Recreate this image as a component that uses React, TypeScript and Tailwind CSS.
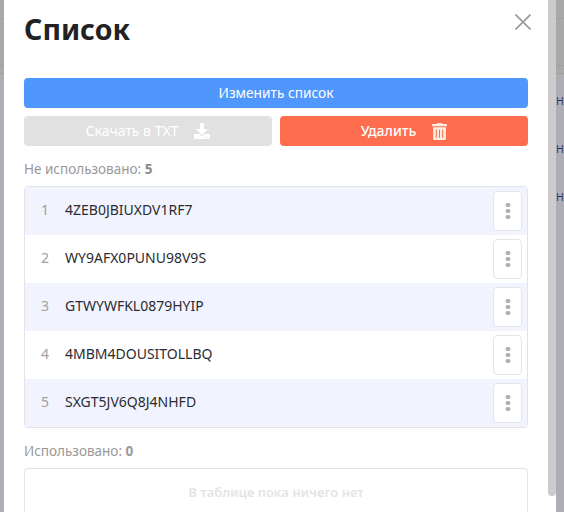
import { FaDownload, FaTrashAlt } from 'react-icons/fa';

const codes = ['4ZEB0JBIUXDV1RF7', 'WY9AFX0PUNU98V9S', 'GTWYWFKL0879HYIP', '4MBM4DOUSITOLLBQ', 'SXGT5JV6Q8J4NHFD'];

function Dots() {
  return (
    <div className="flex translate-x-[0.5px] flex-col gap-[1.5px]">
      <span className="h-[4.5px] w-[4.5px] rounded-full bg-[#b0b0b0]" />
      <span className="h-[4.5px] w-[4.5px] rounded-full bg-[#b0b0b0]" />
      <span className="h-[4.5px] w-[4.5px] rounded-full bg-[#b0b0b0]" />
    </div>
  );
}

function Row({ num, code }: { num: number; code: string }) {
  return (
    <div className="flex h-12 items-center pl-4 pr-[5px] odd:bg-[#f1f4fe] even:bg-white">
      <span className="w-[24px] pb-[2px] text-sm text-[#a0a0a0]">{num}</span>
      <span className="flex-1 pb-[2px] text-sm text-[#2b2b33]">{code}</span>
      <button className="flex h-10 w-[29px] items-center justify-center rounded border border-[#e4e4e8] bg-white">
        <Dots />
      </button>
    </div>
  );
}

// the page behind the modal only shows as two thin strips
function SideStrip({ width, text }: { width: string; text?: boolean }) {
  return (
    <div className={`${width} h-full shrink-0 overflow-hidden bg-[#aeadb6]`}>
      <div className="h-[75px] bg-[#a9a9a9]">
        <div className="h-[19px] border-b border-[#9f9f9f]" />
        <div className="h-[47px] border-b border-[#9f9f9f]" />
        <div className="h-[8px] border-b border-[#9f9f9f]" />
      </div>
      {text && (
        <div className="flex flex-col gap-[28px] pt-[16px] text-[10.5px] leading-[20px] text-[#34345a]">
          <div>Н</div>
          <div>Н</div>
          <div>Н</div>
        </div>
      )}
    </div>
  );
}

export default function App() {
  return (
    <div className="flex h-[512px] w-[564px] overflow-hidden font-['Noto_Sans','Open_Sans',sans-serif]">
      <SideStrip width="w-1" />

      <div className="relative h-full w-[552px] shrink-0 overflow-hidden bg-white">
        <div className="w-[544px] px-5">
          <h1 className="pt-[8px] text-[28.5px] font-bold leading-[42px] text-[#222222]">Список</h1>

          <button className="mt-[28px] block h-[30px] w-full rounded bg-[#4f97fd] text-[13.7px] text-white">
            Изменить список
          </button>
          <div className="mt-2 flex gap-2">
            <button className="flex h-[30px] flex-1 items-center justify-center gap-4 rounded bg-[#e1e1e1] text-sm text-white">
              Скачать в TXT
              <FaDownload className="h-4 w-4" />
            </button>
            <button className="flex h-[30px] flex-1 items-center justify-center gap-4 rounded bg-[#ff6d4f] text-sm font-medium text-white">
              Удалить
              <FaTrashAlt className="h-[17px] w-[15px] text-[#fdeedd]" />
            </button>
          </div>

          <p className="mt-[13px] text-[13.5px] leading-[20px] text-[#999999]">
            Не использовано: <b className="font-bold text-[#8a8a8a]">5</b>
          </p>
          <div className="mt-[7px] overflow-hidden rounded-sm border border-[#e2e2e8]">
            {codes.map((code, i) => (
              <Row key={code} num={i + 1} code={code} />
            ))}
          </div>

          <p className="mt-[13px] text-[13.5px] leading-[20px] text-[#999999]">
            Использовано: <b className="font-bold text-[#999999]">0</b>
          </p>
          <div className="mt-[7px] flex h-[60px] items-start justify-center rounded-sm border border-[#e4e4e4] pt-[14px] text-[13px] font-semibold text-[#e4e4e4]">
            В таблице пока ничего нет
          </div>
        </div>

        <button className="absolute left-[511px] top-[14px] h-4 w-4 text-[#999999]">
          <svg viewBox="0 0 16 16" className="h-4 w-4" fill="none" stroke="currentColor" strokeWidth="1.6">
            <path d="M0.5 0.5 L15.5 15.5 M15.5 0.5 L0.5 15.5" />
          </svg>
        </button>

        {/* scrollbar thumb */}
        <div className="absolute right-0 top-0 h-[496px] w-2 rounded-b-full bg-[#cccccc]" />
      </div>

      <SideStrip width="w-2" text />
    </div>
  );
}
